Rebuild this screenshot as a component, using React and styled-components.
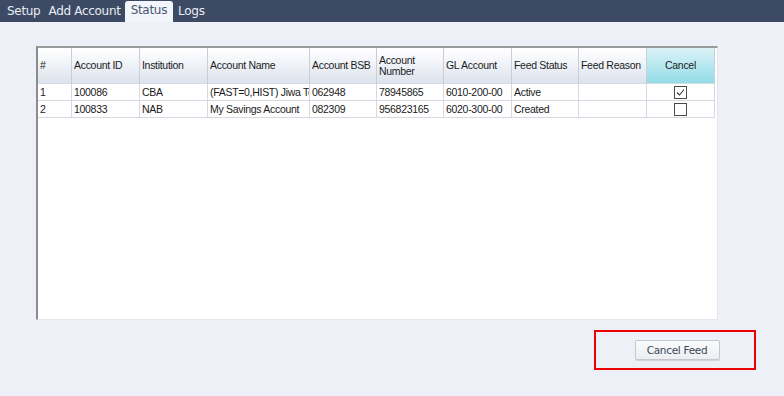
import React from "react";
import styled, { createGlobalStyle } from "styled-components";

const Global = createGlobalStyle`
  html, body { margin: 0; padding: 0; }
  body { background: #edf0f7; font-family: "DejaVu Sans", Verdana, sans-serif; }
  #root { width: 784px; height: 396px; overflow: hidden; }
`;

const Page = styled.div`
  width: 784px;
  height: 396px;
  display: flex;
  flex-direction: column;
  background: #edf0f7;
`;

const TabBar = styled.div`
  height: 22px;
  background: #3d4a64;
  display: flex;
  align-items: flex-end;
  padding-left: 3px;
`;

const Tab = styled.div`
  height: ${(p) => (p.$active ? "21px" : "22px")};
  padding: 0 ${(p) => (p.$active ? "6px" : "4px")};
  margin-right: ${(p) => (p.$active ? "1px" : "0")};
  display: flex;
  align-items: center;
  font-family: "DejaVu Sans", Verdana, sans-serif;
  font-size: 12px;
  letter-spacing: -0.3px;
  color: ${(p) => (p.$active ? "#4a5570" : "#e9edf4")};
  background: ${(p) => (p.$active ? "#f2f6fc" : "transparent")};
  border-radius: ${(p) => (p.$active ? "3px 3px 0 0" : "0")};
  padding-bottom: ${(p) => (p.$active ? "3px" : "0")};
  box-sizing: border-box;
`;

const Content = styled.div`
  flex: 1;
  display: flex;
  flex-direction: column;
  padding: 24px 0 0 36px;
`;

const Panel = styled.div`
  width: 682px;
  height: 274px;
  box-sizing: border-box;
  background: #ffffff;
  border-top: 2px solid #9a9a9a;
  border-left: 2px solid #8c8c8c;
  border-right: 1px solid #e4e6ea;
  border-bottom: 1px solid #e4e6ea;
`;

const Grid = styled.div`
  display: grid;
  grid-template-columns: 34px 68px 68px 102px 67px 67px 68px 67px 68px 68px;
  font-family: "Liberation Sans", Arial, sans-serif;
  font-size: 10.5px;
  letter-spacing: -0.3px;
  color: #1a1a1a;
`;

const HeadCell = styled.div`
  height: 36px;
  box-sizing: border-box;
  display: flex;
  align-items: center;
  justify-content: ${(p) => (p.$center ? "center" : "flex-start")};
  padding-left: ${(p) => (p.$center ? "0" : "2px")};
  line-height: 11px;
  white-space: pre-line;
  border-right: 1px solid #c9ced8;
  border-bottom: 1px solid #d5dae3;
  background: ${(p) =>
    p.$accent
      ? "linear-gradient(#dcf3f7, #a8e3ec 70%, #93dbe6)"
      : "linear-gradient(#ffffff, #f0f3f8 45%, #dde3ec)"};
  color: #1c1c1c;
`;

const Cell = styled.div`
  height: 17px;
  box-sizing: border-box;
  display: flex;
  align-items: center;
  justify-content: ${(p) => (p.$center ? "center" : "flex-start")};
  padding-left: ${(p) => (p.$center ? "0" : "2px")};
  border-right: 1px solid #d5dae2;
  border-bottom: 1px solid #d5dae2;
  white-space: nowrap;
  overflow: hidden;
  background: #ffffff;
`;

const Check = styled.span`
  width: 11px;
  height: 11px;
  border: 1px solid #4b4b4b;
  background: #ffffff;
  display: flex;
  align-items: center;
  justify-content: center;
`;

const Footer = styled.div`
  display: flex;
  justify-content: flex-end;
  padding-right: 28px;
  margin-top: 10px;
`;

const Highlight = styled.div`
  width: 162px;
  height: 40px;
  box-sizing: border-box;
  border: 2px solid #ee0000;
  display: flex;
  align-items: center;
  justify-content: center;
  padding-left: 4px;
`;

const Button = styled.button`
  width: 85px;
  height: 20px;
  padding: 0;
  box-sizing: border-box;
  border: 1px solid #c4c8ce;
  border-radius: 2px;
  background: linear-gradient(#fbfbfc, #eceef1);
  box-shadow: 0 1px 0 #d2d5da;
  font-family: "DejaVu Sans", "Open Sans", sans-serif;
  font-size: 10.5px;
  letter-spacing: -0.3px;
  color: #3a4658;
`;

const headers = [
  "#",
  "Account ID",
  "Institution",
  "Account Name",
  "Account BSB",
  "Account\nNumber",
  "GL Account",
  "Feed Status",
  "Feed Reason",
];

const rows = [
  ["1", "100086", "CBA", "(FAST=0,HIST) Jiwa Test", "062948", "78945865", "6010-200-00", "Active", "", true],
  ["2", "100833", "NAB", "My Savings Account", "082309", "956823165", "6020-300-00", "Created", "", false],
];

export default function App() {
  return (
    <Page>
      <Global />
      <TabBar>
        <Tab>Setup</Tab>
        <Tab>Add Account</Tab>
        <Tab $active>Status</Tab>
        <Tab>Logs</Tab>
      </TabBar>
      <Content>
        <Panel>
          <Grid>
            {headers.map((h) => (
              <HeadCell key={h}>{h}</HeadCell>
            ))}
            <HeadCell $accent $center>Cancel</HeadCell>
            {rows.map((r) => (
              <React.Fragment key={r[0]}>
                {r.slice(0, 9).map((v, i) => (
                  <Cell key={i}>{v}</Cell>
                ))}
                <Cell $center>
                  <Check>
                    {r[9] && (
                      <svg width="9" height="9" viewBox="0 0 9 9">
                        <path d="M1 4.5 L3.5 7 L8 1.5" fill="none" stroke="#333" strokeWidth="1.1" />
                      </svg>
                    )}
                  </Check>
                </Cell>
              </React.Fragment>
            ))}
          </Grid>
        </Panel>
        <Footer>
          <Highlight>
            <Button>Cancel Feed</Button>
          </Highlight>
        </Footer>
      </Content>
    </Page>
  );
}
